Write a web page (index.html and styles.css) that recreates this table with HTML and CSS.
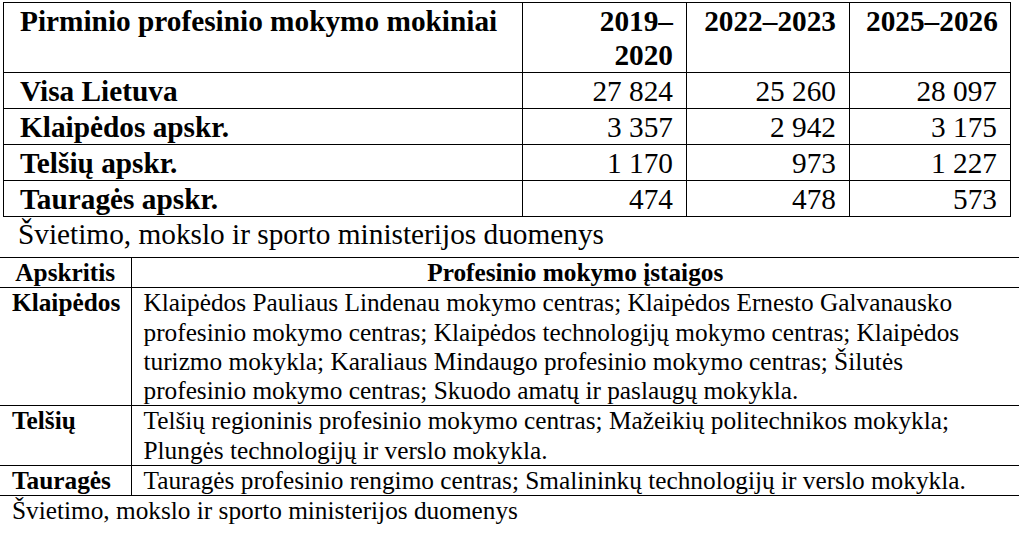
FILE: index.html
```html
<!DOCTYPE html>
<html lang="lt">
<head>
<meta charset="utf-8">
<title>Pirminio profesinio mokymo mokiniai</title>
<link rel="stylesheet" href="styles.css">
</head>
<body>
<div class="page">
  <table class="stats">
    <colgroup>
      <col class="c-name">
      <col class="c-year1">
      <col class="c-year2">
      <col class="c-year3">
    </colgroup>
    <thead>
      <tr>
        <th class="name">Pirminio profesinio mokymo mokiniai</th>
        <th class="num">2019–<br>2020</th>
        <th class="num">2022–2023</th>
        <th class="num">2025–2026</th>
      </tr>
    </thead>
    <tbody>
      <tr><th class="name">Visa Lietuva</th><td class="num">27 824</td><td class="num">25 260</td><td class="num">28 097</td></tr>
      <tr><th class="name">Klaipėdos apskr.</th><td class="num">3 357</td><td class="num">2 942</td><td class="num">3 175</td></tr>
      <tr><th class="name">Telšių apskr.</th><td class="num">1 170</td><td class="num">973</td><td class="num">1 227</td></tr>
      <tr><th class="name">Tauragės apskr.</th><td class="num">474</td><td class="num">478</td><td class="num">573</td></tr>
    </tbody>
  </table>
  <p class="source source-lg">Švietimo, mokslo ir sporto ministerijos duomenys</p>

  <table class="schools">
    <colgroup>
      <col class="c-county">
      <col class="c-list">
    </colgroup>
    <thead>
      <tr>
        <th class="county-h">Apskritis</th>
        <th class="list-h">Profesinio mokymo įstaigos</th>
      </tr>
    </thead>
    <tbody>
      <tr>
        <th class="county">Klaipėdos</th>
        <td class="list">Klaipėdos Pauliaus Lindenau mokymo centras; Klaipėdos Ernesto Galvanausko profesinio mokymo centras; Klaipėdos technologijų mokymo centras; Klaipėdos turizmo mokykla; Karaliaus Mindaugo profesinio mokymo centras; Šilutės profesinio mokymo centras; Skuodo amatų ir paslaugų mokykla.</td>
      </tr>
      <tr>
        <th class="county">Telšių</th>
        <td class="list">Telšių regioninis profesinio mokymo centras; Mažeikių politechnikos mokykla; Plungės technologijų ir verslo mokykla.</td>
      </tr>
      <tr>
        <th class="county">Tauragės</th>
        <td class="list">Tauragės profesinio rengimo centras; Smalininkų technologijų ir verslo mokykla.</td>
      </tr>
    </tbody>
  </table>
  <p class="source source-sm">Švietimo, mokslo ir sporto ministerijos duomenys</p>
</div>
</body>
</html>
```

FILE: styles.css
```css
html, body {
  margin: 0;
  padding: 0;
  background: #ffffff;
}

body {
  font-family: "Liberation Serif", "Times New Roman", serif;
  color: #000000;
}

.page {
  width: 1019px;
  padding-top: 2px;
}

/* ---------- top table ---------- */
.stats {
  margin-left: 3px;
  width: 1007px;
  border-collapse: collapse;
  table-layout: fixed;
  font-size: 29.3px;
  line-height: 34px;
}

.c-name { width: 519px; }
.c-year1 { width: 164px; }
.c-year2 { width: 163px; }
.c-year3 { width: 161px; }

.stats th,
.stats td {
  font-family: "Liberation Serif", "Times New Roman", serif;
  border: 1px solid #000;
  padding: 1px 13px 0 16px;
  vertical-align: top;
}

.stats th {
  font-weight: bold;
}

.stats .name {
  text-align: left;
}

.stats .num {
  text-align: right;
  white-space: nowrap;
}

.stats td.num {
  font-weight: normal;
}

/* ---------- captions ---------- */
.source {
  margin: 0;
  font-family: "Liberation Serif", "Times New Roman", serif;
}

.source-lg {
  font-size: 29.3px;
  line-height: 34px;
  padding-left: 18px;
  margin-bottom: 6px;
}

.source-sm {
  font-size: 25.3px;
  line-height: 29.3px;
  padding-left: 12px;
}

/* ---------- bottom table ---------- */
.schools {
  width: 1019px;
  border-collapse: collapse;
  table-layout: fixed;
  font-size: 25.3px;
  line-height: 29.3px;
}

.c-county { width: 131px; }
.c-list { width: 888px; }

.schools th,
.schools td {
  font-family: "Liberation Serif", "Times New Roman", serif;
  border-top: 1px solid #000;
  border-bottom: 1px solid #000;
  padding: 0;
  vertical-align: top;
}

.schools th:first-child,
.schools td:first-child {
  border-right: 1px solid #000;
}

.schools .county-h,
.schools .list-h {
  text-align: center;
  font-weight: bold;
}

.schools .county {
  text-align: left;
  font-weight: bold;
  padding-left: 12px;
}

.schools .list {
  padding-left: 12px;
  padding-right: 18px;
}
```
